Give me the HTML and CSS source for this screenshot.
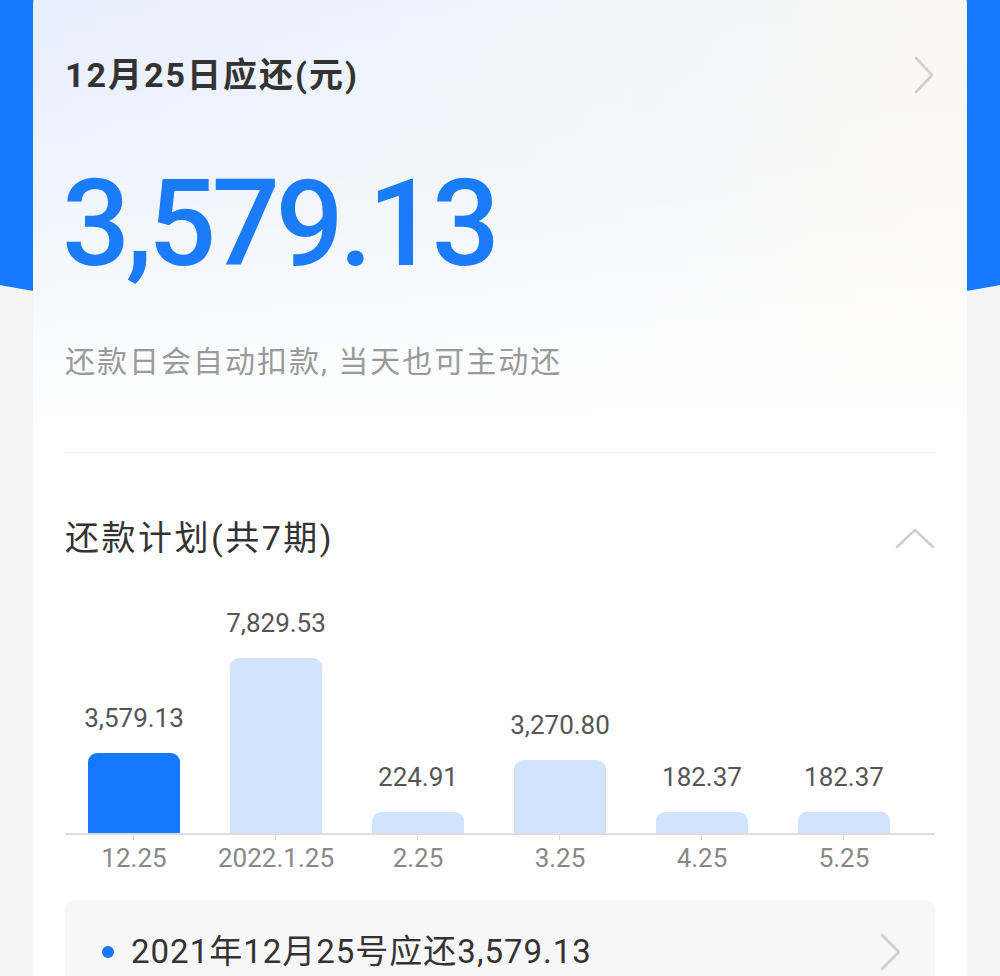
FILE: index.html
```html
<!DOCTYPE html>
<html lang="zh-CN">
<head>
    <meta charset="UTF-8">
    <meta name="viewport" content="width=device-width, initial-scale=1.0">
    <title>还款计划</title>
    <link rel="stylesheet" href="styles.css">
</head>
<body>
<div class="page">
    <div class="hero-bg"></div>
    <div class="card">
        <div class="due-head">
            <h1 class="due-title">12月25日应还(元)</h1>
            <svg class="chev-right" width="22" height="38" viewBox="0 0 22 38">
                <polyline points="3,2 19,19 3,36" fill="none" stroke="#cfcfcf" stroke-width="2.6" stroke-linecap="round" stroke-linejoin="round"/>
            </svg>
        </div>
        <div class="due-amount">3,579.13</div>
        <p class="due-note">还款日会自动扣款, 当天也可主动还</p>

        <div class="divider"></div>

        <div class="plan-head">
            <h2 class="plan-title">还款计划(共7期)</h2>
            <svg class="chev-up" width="40" height="22" viewBox="0 0 40 22">
                <polyline points="2,20 20,3 38,20" fill="none" stroke="#cfcfcf" stroke-width="2.6" stroke-linecap="round" stroke-linejoin="round"/>
            </svg>
        </div>

        <div class="chart">
            <div class="plot">
                <div class="col">
                    <span class="val">3,579.13</span>
                    <div class="bar current" style="height: 80px"></div>
                </div>
                <div class="col">
                    <span class="val">7,829.53</span>
                    <div class="bar" style="height: 175px"></div>
                </div>
                <div class="col">
                    <span class="val">224.91</span>
                    <div class="bar" style="height: 21px"></div>
                </div>
                <div class="col">
                    <span class="val">3,270.80</span>
                    <div class="bar" style="height: 73px"></div>
                </div>
                <div class="col">
                    <span class="val">182.37</span>
                    <div class="bar" style="height: 21px"></div>
                </div>
                <div class="col">
                    <span class="val">182.37</span>
                    <div class="bar" style="height: 21px"></div>
                </div>
            </div>
            <div class="axis">
                <span class="tick">12.25</span>
                <span class="tick">2022.1.25</span>
                <span class="tick">2.25</span>
                <span class="tick">3.25</span>
                <span class="tick">4.25</span>
                <span class="tick">5.25</span>
            </div>
        </div>

        <div class="detail">
            <span class="dot"></span>
            <span class="detail-text">2021年12月25号应还3,579.13</span>
            <svg class="chev-small" width="24" height="38" viewBox="0 0 24 38">
                <polyline points="3,2 20,19 3,36" fill="none" stroke="#cfcfcf" stroke-width="2.6" stroke-linecap="round" stroke-linejoin="round"/>
            </svg>
        </div>
    </div>
</div>
</body>
</html>
```

FILE: styles.css
```css
body {
    margin: 0;
    padding: 0;
    background-color: #f5f5f5;
    font-family: Roboto, "Noto Sans CJK SC", sans-serif;
    color: #333;
}
.page {
    position: relative;
    height: 976px;
    overflow: hidden;
}
.hero-bg {
    position: absolute;
    top: 0;
    left: -200px;
    width: 1400px;
    height: 324px;
    background: #1677ff;
    border-radius: 0 0 700px 700px / 0 0 130px 130px;
}
.card {
    position: relative;
    margin: -14px 33px 0;
    padding: 69px 32px 40px;
    border-radius: 18px;
    background:
        linear-gradient(to bottom, rgba(255, 255, 255, 0) 0, rgba(255, 255, 255, 0.3) 200px, #fff 440px),
        linear-gradient(100deg, #e7effd 0%, #eef3fb 45%, #f8f7f3 80%, #fbf8ef 100%);
}
.due-head {
    display: flex;
    align-items: center;
    justify-content: space-between;
    height: 40px;
}
.due-title {
    margin: 0;
    font-size: 34px;
    line-height: 40px;
    font-weight: 700;
    letter-spacing: 2px;
    color: #333;
}
.due-amount {
    margin-top: 69px;
    margin-left: -3px;
    font-size: 120px;
    line-height: 120px;
    font-weight: 500;
    letter-spacing: -4.5px;
    color: #1a7bfb;
}
.due-note {
    margin: 58px 0 0;
    font-size: 30px;
    line-height: 40px;
    letter-spacing: 2px;
    color: #9a9a9a;
}
.divider {
    margin-top: 70px;
    height: 1px;
    background: #efefef;
}
.plan-head {
    display: flex;
    align-items: center;
    justify-content: space-between;
    margin-top: 65px;
    height: 40px;
}
.plan-title {
    margin: 0;
    font-size: 34px;
    line-height: 40px;
    font-weight: 400;
    letter-spacing: 2.5px;
    color: #333;
}
.chart {
    margin-top: 42px;
}
.plot {
    display: flex;
    align-items: flex-end;
    height: 233px;
    border-bottom: 2px solid #dedede;
}
.plot .col:first-child {
    margin-left: -2px;
}
.col {
    width: 142px;
    display: flex;
    flex-direction: column;
    align-items: center;
    justify-content: flex-end;
}
.val {
    font-size: 26px;
    line-height: 30px;
    color: #555;
    margin-bottom: 20px;
}
.bar {
    width: 92px;
    border-radius: 9px 9px 0 0;
    background: #d1e3fd;
}
.bar.current {
    background: #1677ff;
}
.axis {
    display: flex;
    padding-top: 8px;
    margin-left: -2px;
}
.tick {
    position: relative;
    width: 142px;
    text-align: center;
    font-size: 26px;
    line-height: 30px;
    color: #888;
}
.tick::before {
    content: "";
    position: absolute;
    top: -8px;
    left: 70px;
    width: 1px;
    height: 5px;
    background: #d6d6d6;
}
.detail {
    display: flex;
    align-items: center;
    margin-top: 27px;
    padding: 32px 32px 32px 37px;
    border-radius: 10px;
    background: #f7f7f7;
}
.dot {
    width: 12px;
    height: 12px;
    border-radius: 50%;
    background: #1677ff;
    margin-right: 17px;
}
.detail-text {
    flex: 1;
    font-size: 33px;
    line-height: 40px;
    letter-spacing: 1px;
    color: #333;
}
```
